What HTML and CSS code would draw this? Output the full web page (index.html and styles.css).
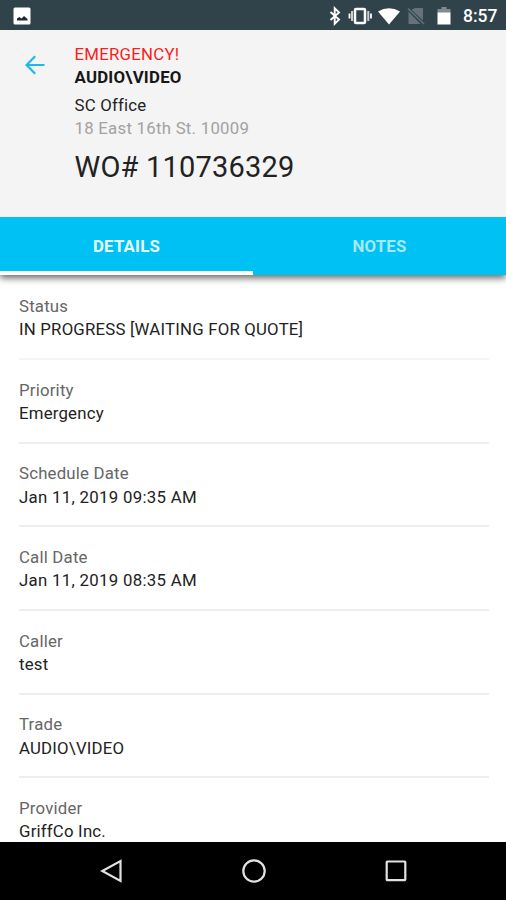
FILE: index.html
```html
<!DOCTYPE html>
<html lang="en">
<head>
<meta charset="utf-8">
<title>Work Order</title>
<link rel="stylesheet" href="styles.css">
</head>
<body>
<div class="statusbar">
  <svg class="photo" viewBox="0 0 18 18" width="18" height="18"><rect x=".5" y=".5" width="17" height="17" rx="1.500" fill="#fff"/><path d="M4 13.500v-2l2.500-1.500 2 1.500L11 9l3.500 3v1.500z" fill="#1c292e"/></svg>
  <svg class="indicators" viewBox="0 0 126 20" width="126" height="20">
    <path d="M2.500 6l8.500 7.600-4.300 4.200V2.200l4.300 4.200-8.500 7.600" fill="none" stroke="#fff" stroke-width="1.900"/>
    <g stroke="#fff" fill="none"><rect x="27" y="3" width="10" height="14" rx="1" stroke-width="2.500"/><path d="M24 5v10M40.300 5v10" stroke-width="2" stroke="#c9ced0"/><path d="M21.500 7.500v5M43 7.500v5" stroke-width="1.800"/></g>
    <path d="M50 5.500Q61 -1 72 5.500L61 18.500z" fill="#fff"/>
    <path d="M87 2h8v12.500L83.500 3.800zM80.500 5.500 92.500 18h-12z" fill="#65727a"/><path d="m80 2.500 16 15.500" stroke="#65727a" stroke-width="1.600"/>
    <path d="M113.500 1h5v2h4V7h-13V3h4z" fill="#7f8b90"/><path d="M109.500 6.500h13v12h-13z" fill="#fff"/>
  </svg>
  <span class="clock">8:57</span>
</div>
<header class="header">
  <svg class="back" viewBox="0 0 20 20" width="20" height="20"><path d="M19.500 10H2M10.200 1.200 1.500 10l8.700 8.800" fill="none" stroke="#1eb9ea" stroke-width="2.200"/></svg>
  <div class="order">
    <div class="alert">EMERGENCY!</div>
    <div class="trade">AUDIO\VIDEO</div>
    <div class="site">SC Office</div>
    <div class="address">18 East 16th St. 10009</div>
    <h1 class="number">WO# 110736329</h1>
  </div>
</header>
<nav class="tabs">
  <div class="tab active">DETAILS</div>
  <div class="tab">NOTES</div>
</nav>
<main class="list">
  <section class="item"><div class="label">Status</div><div class="value">IN PROGRESS [WAITING FOR QUOTE]</div></section>
  <section class="item"><div class="label">Priority</div><div class="value">Emergency</div></section>
  <section class="item"><div class="label">Schedule Date</div><div class="value date">Jan 11, 2019 09:35 AM</div></section>
  <section class="item"><div class="label">Call Date</div><div class="value date">Jan 11, 2019 08:35 AM</div></section>
  <section class="item"><div class="label">Caller</div><div class="value">test</div></section>
  <section class="item"><div class="label">Trade</div><div class="value">AUDIO\VIDEO</div></section>
  <section class="item"><div class="label">Provider</div><div class="value">GriffCo Inc.</div></section>
</main>
<footer class="navbar">
  <svg viewBox="0 0 24 24" width="24" height="24"><path d="M20.500 2v20L2.300 12z"/></svg>
  <svg viewBox="0 0 24 24" width="24" height="24"><circle cx="12" cy="12" r="10.700"/></svg>
  <svg viewBox="0 0 24 24" width="24" height="24"><rect x="2.700" y="2.500" width="18.600" height="18.600" rx=".6"/></svg>
</footer>
</body>
</html>
```

FILE: styles.css
```css
* { box-sizing: border-box; }
body {
  margin: 0;
  width: 506px;
  height: 900px;
  overflow: hidden;
  display: flex;
  flex-direction: column;
  background: #fff;
  color: #222;
  font: 16.800px/23.200px Roboto, sans-serif;
  letter-spacing: 0.200px;
}
.statusbar {
  height: 30px;
  flex: none;
  display: flex;
  align-items: center;
  padding: 0 9px 0 13px;
  background: #31434a;
  color: #fff;
}
.photo { margin-top: 1px; }
.indicators { margin-left: auto; margin-top: 1px; }
.clock {
  width: 34px;
  margin-left: 9px;
  font-size: 17.500px;
  font-weight: 500;
  line-height: 30px;
  letter-spacing: 0;
  padding-top: 2px;
  white-space: nowrap;
}
.header {
  position: relative;
  z-index: 1;
  height: 187px;
  flex: none;
  display: flex;
  background: #f4f4f4;
}
.back { margin: 25px 0 0 25px; }
.order { padding: 13px 0 0 29.500px; white-space: nowrap; }
.alert { color: #fb1d20; letter-spacing: 0.250px; }
.trade { font-weight: 700; color: #171717; letter-spacing: 0.250px; }
.site { margin-top: 4.500px; }
.address { color: #a2a2a2; letter-spacing: 0.260px; }
.number {
  margin: 9.500px 0 0;
  font-size: 29px;
  font-weight: 400;
  line-height: 34px;
}
.tabs {
  position: relative;
  height: 58px;
  flex: none;
  display: flex;
  background: #00c1f3;
  box-shadow: 0 3px 7px rgba(0, 0, 0, .6);
}
.tab {
  flex: 1;
  text-align: center;
  line-height: 58px;
  font-weight: 700;
  color: #a6e7fb;
}
.tab.active { color: #e9faff; border-bottom: 4px solid #fff; }
.list { flex: 1; overflow: hidden; padding: 0 17px 0 19px; }
.item {
  height: 83.700px;
  padding-top: 18.700px;
  border-bottom: 2px solid #eee;
  white-space: nowrap;
}
.item:first-child { height: 85px; padding-top: 20px; border-bottom-color: #f5f5f5; }
.label { color: #666; }
.date { letter-spacing: 0.300px; }
.navbar {
  height: 58px;
  flex: none;
  display: flex;
  justify-content: space-between;
  align-items: center;
  padding: 0 98px 0 100px;
  background: #000;
}
.navbar svg { fill: none; stroke: #e2e2e2; stroke-width: 2.200; }
```
